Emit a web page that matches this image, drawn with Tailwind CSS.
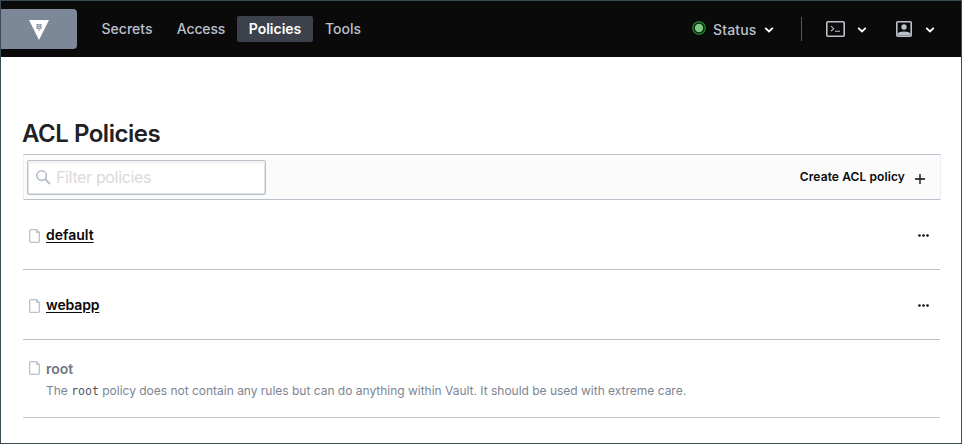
<!DOCTYPE html>
<html lang="en">
<head>
<meta charset="utf-8">
<title>ACL Policies</title>
<script src="https://cdn.jsdelivr.net/npm/@tailwindcss/browser@4"></script>
</head>
<body class="font-['Inter',sans-serif] bg-white">
<div class="w-[962px] h-[444px] border border-[#3a4b54] overflow-hidden whitespace-nowrap text-[#0a0a0a]">
  <header class="h-14 bg-[#0a0a0a] flex items-center text-[14px] font-medium text-[#bac1cc]">
    <a class="w-[76px] h-10 bg-[#7c8797] rounded-r-[4px] flex items-center justify-center">
      <svg class="w-5 h-5 mt-[2px]" viewBox="0 0 20 20"><path fill="#fff" d="M0 0h20L10 20z"/><path fill="#7c8797" d="M7.500 4h1.400v1.400H7.500zM9.300 4h1.400v1.400H9.300zM11.100 4h1.400v1.400h-1.400zM7.500 5.800h1.400v1.400H7.500zM9.300 5.800h1.400v1.400H9.300zM11.100 5.800h1.400v1.400h-1.400zM7.500 7.600h1.400v1.400H7.500zM9.300 7.600h1.400v1.400H9.300zM11.100 7.600h1.400v1.400h-1.400zM9.300 9.400h1.400v1.400H9.300z"/></svg>
    </a>
    <nav class="flex ml-3 leading-[26px]">
      <a class="w-[76px] text-center">Secrets</a>
      <a class="w-[72px] text-center tracking-[-0.15px]">Access</a>
      <a class="w-[76px] text-center bg-[#3c414b] text-white rounded-[2px] font-semibold">Policies</a>
      <a class="w-[60px] text-center">Tools</a>
    </nav>
    <div class="ml-auto flex items-center pr-[26px]">
      <svg class="w-[14px] h-[14px] mb-[3px]" viewBox="0 0 14 14"><circle cx="7" cy="7" r="6.200" fill="#0b210d" stroke="#257a29" stroke-width="1.400"/><circle cx="7" cy="7" r="4.200" fill="#7bcb7e"/></svg>
      <span class="ml-[7px] w-[44px] tracking-[0.15px]">Status</span>
      <svg class="ml-[7px] w-[10px] h-[6px] mt-px" viewBox="0 0 10 6" fill="none" stroke="#fff" stroke-width="1.800"><path d="M1.200.8 5 4.500 8.800.8"/></svg>
      <span class="ml-[27px] w-px h-6 bg-[#525761]"></span>
      <svg class="ml-[24px] w-[19px] h-[16px]" viewBox="0 0 19 16" fill="none" stroke="#bac1cc"><rect x=".8" y=".8" width="17.400" height="14.400" rx="1" stroke-width="1.600"/><path stroke-width="1.100" d="m5 5.200 2.700 2.500L5 10.200M9 10.300h5"/></svg>
      <svg class="ml-3 w-[10px] h-[6px] mt-px" viewBox="0 0 10 6" fill="none" stroke="#fff" stroke-width="1.800"><path d="M1.200.8 5 4.500 8.800.8"/></svg>
      <svg class="ml-[29px] w-4 h-4" viewBox="0 0 16 16"><rect x=".8" y=".8" width="14.400" height="14.400" rx="1" fill="none" stroke="#bac1cc" stroke-width="1.600"/><circle cx="8" cy="6" r="2.700" fill="#bac1cc"/><path fill="#bac1cc" d="M1.500 14.500v-1.700C3.200 9.700 12.800 9.700 14.500 12.800v1.700z"/></svg>
      <svg class="ml-[13px] w-[10px] h-[6px] mt-px" viewBox="0 0 10 6" fill="none" stroke="#fff" stroke-width="1.800"><path d="M1.200.8 5 4.500 8.800.8"/></svg>
    </div>
  </header>
  <main class="pl-[22px] pr-[21px] pt-[62px]">
    <h1 class="-ml-px text-[24px] leading-[29px] font-semibold tracking-[-0.48px] text-[#1f2124]">ACL Policies</h1>
    <div class="mt-[6px] h-[46px] border border-x-[#ebeef2] border-y-[#bac1cc] bg-[#fbfbfc] flex items-center pl-[3px] pr-[15px] w-[918px]">
      <div class="w-[239px] h-[35px] border border-[#bac1cc] rounded-[2px] bg-white shadow-[inset_0_3px_1px_#f3f3f4,inset_0_0_0_0.5px_#bac1cc] flex items-center pl-[8px]">
        <svg class="w-[15px] h-[15px]" viewBox="0 0 15 15" fill="none" stroke="#b5bdcb"><circle cx="5.600" cy="5.600" r="4.800" stroke-width="1.600"/><path stroke-width="2" d="m9 9 5 5"/></svg>
        <span class="ml-[5px] text-[16px] tracking-[-0.35px] text-[#d9d9db]">Filter policies</span>
      </div>
      <a class="ml-auto flex items-center text-[12px] font-semibold"><span class="tracking-[0.1px]">Create ACL policy</span>
        <svg class="ml-[10px] w-[10px] h-[10px] mt-[3px]" viewBox="0 0 10 10" stroke="#0a0a0a" stroke-width="1.300"><path d="M5 0v10M0 5h10"/></svg>
      </a>
    </div>
    <div class="h-[70px] border-b border-[#bac1cc] flex items-center pl-[6px] pr-[11px] text-[14px] font-semibold">
      <svg class="w-[11px] h-[14px] mt-[3px]" viewBox="0 0 11 14" fill="none" stroke="#bac1cc" stroke-width="1.300"><path d="M1.500.7H7.500L10.300 3.500V12.500a.8.8 0 0 1-.8.8H1.500a.8.8 0 0 1-.8-.8V1.500a.8.8 0 0 1 .8-.8z"/><path d="M7.500.7V3.500h2.800" stroke-width="1"/></svg>
      <a class="ml-[6px] underline underline-offset-2">default</a>
      <svg class="ml-auto mt-px w-[11px] h-[3px]" viewBox="0 0 11 3"><path d="M1.500 1.500h0M5.500 1.500h0M9.500 1.500h0" stroke="#0a0a0a" stroke-width="2.700" stroke-linecap="round"/></svg>
    </div>
    <div class="h-[70px] border-b border-[#bac1cc] flex items-center pl-[6px] pr-[11px] text-[14px] font-semibold">
      <svg class="w-[11px] h-[14px] mt-[3px]" viewBox="0 0 11 14" fill="none" stroke="#bac1cc" stroke-width="1.300"><path d="M1.500.7H7.500L10.300 3.500V12.500a.8.8 0 0 1-.8.8H1.500a.8.8 0 0 1-.8-.8V1.500a.8.8 0 0 1 .8-.8z"/><path d="M7.500.7V3.500h2.800" stroke-width="1"/></svg>
      <a class="ml-[6px] underline underline-offset-2 tracking-[-0.15px]">webapp</a>
      <svg class="ml-auto mt-px w-[11px] h-[3px]" viewBox="0 0 11 3"><path d="M1.500 1.500h0M5.500 1.500h0M9.500 1.500h0" stroke="#0a0a0a" stroke-width="2.700" stroke-linecap="round"/></svg>
    </div>
    <div class="h-[78px] border-b border-[#c4c9d3] pl-[6px] pt-[18px]">
      <div class="flex items-center h-5 text-[14px] font-semibold text-[#6f7682]">
        <svg class="w-[11px] h-[14px]" viewBox="0 0 11 14" fill="none" stroke="#bac1cc" stroke-width="1.300"><path d="M1.500.7H7.500L10.300 3.500V12.500a.8.8 0 0 1-.8.8H1.500a.8.8 0 0 1-.8-.8V1.500a.8.8 0 0 1 .8-.8z"/><path d="M7.500.7V3.500h2.800" stroke-width="1"/></svg>
        <span class="ml-[6px]">root</span>
      </div>
      <p class="ml-[17px] mt-[4px] text-[12px] leading-[18px] tracking-[-0.01px] text-[#7c8594]">The <code class="font-['DejaVu_Sans_Mono',monospace] text-[11.500px] text-[#525761]">root</code> policy does not contain any rules but can do anything within Vault. It should be used with extreme care.</p>
    </div>
  </main>
</div>
</body>
</html>
